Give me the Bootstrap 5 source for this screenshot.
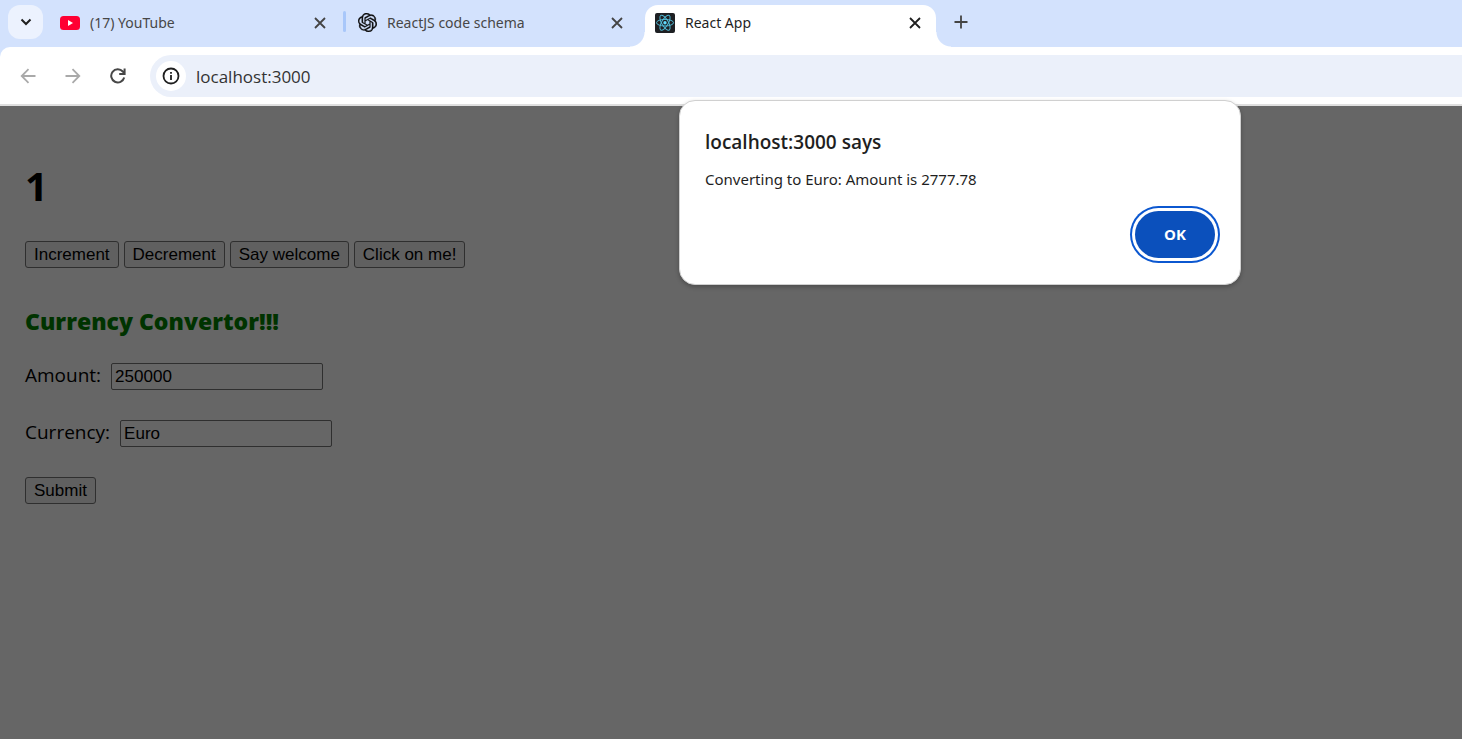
<!DOCTYPE html>
<html lang="en">
<head>
<meta charset="utf-8">
<meta name="viewport" content="width=device-width, initial-scale=1">
<title>React App</title>
<link href="https://cdn.jsdelivr.net/npm/bootstrap@5.3.0/dist/css/bootstrap.min.css" rel="stylesheet">
<style>
  body { font-family: "Open Sans", "Noto Sans", sans-serif; background: #666; color: #000; }
  button, input { font-family: inherit; }
  svg { display: block; flex: none; }
  .plain-btn { border: 0; padding: 0; background: none; display: flex; align-items: center; justify-content: center; }

  /* tab strip */
  .tab-strip { background: #d3e2fd; height: 47px; padding-left: 8px; }
  .tab-search { width: 35px; height: 34px; margin: 5px 1px 0 0; border-radius: 12px; background: #ecf2fe; color: #1f1f1f; }
  .browser-tab { width: 299px; height: 42px; margin-top: 5px; padding: 0 13px 7px 12px; color: #474747; font-family: "Noto Sans", sans-serif; font-size: 14px; line-height: 20px; }
  .browser-tab a { color: inherit; text-decoration: none; gap: 10px; }
  .tab-close { width: 20px; height: 20px; color: #444; }
  .tab-rule { width: 3px; height: 21px; margin-top: 11px; border-radius: 2px; background: #a8c7fa; }
  .tab-before { width: 294px; margin-right: 5px; }
  .tab-active { position: relative; width: 291px; padding-left: 10px; padding-right: 11px; background: #fff; border-radius: 13px 13px 0 0; color: #1f1f1f; }
  .tab-active .tab-close { color: #1f1f1f; }
  .tab-active::before, .tab-active::after { content: ""; position: absolute; bottom: 0; width: 15px; height: 15px; }
  .tab-active::before { right: 100%; background: radial-gradient(circle at 0 0, transparent 14px, #fff 15px); }
  .tab-active::after { left: 100%; background: radial-gradient(circle at 100% 0, transparent 14px, #fff 15px); }
  .new-tab { width: 20px; height: 20px; margin: 12px 0 0 15px; color: #444; }

  /* toolbar */
  .toolbar-wrap { background: #d3e2fd; }
  .toolbar { background: #fff; border-radius: 10px 0 0 0; border-bottom: 2px solid #dfdfdf; padding: 8px 0 7px 18px; }
  .nav-icons { gap: 25px; color: #a9a9a9; }
  .nav-icons button { width: 20px; height: 20px; color: inherit; }
  .nav-icons .reload { color: #474747; }
  .omnibox { margin-left: 22px; padding-left: 6px; height: 42px; border-radius: 21px 0 0 21px; background: #ebf0fa; gap: 10px; }
  .site-info { width: 30px; height: 30px; border-radius: 50%; background: #fff; color: #1f1f1f; }
  .address { border: 0; outline: 0; padding: 1px 0 0; background: none; font-size: 17px; color: #333; min-width: 0; }

  /* dimmed page */
  .page { padding: 55px 25px; }
  .counter { font-size: 40px; line-height: 50px; font-weight: 700; margin: 0 0 30px; }
  .ui-btn { font: 17px/23px "Liberation Sans", Arial, sans-serif; color: #000; background: #606060; border: 1px solid #2f2f2f; border-radius: 3px; padding: 1px 8px; height: 27px; }
  .btn-line { gap: 5px; }
  .converter-title { font-size: 23px; line-height: 30px; font-weight: 800; color: #030; margin: 38px 0 27px; }
  .form-line { gap: 10px; margin-bottom: 30px; height: 27px; font-size: 19px; line-height: 24px; }
  .ui-input { font: 17px/23px "Liberation Sans", Arial, sans-serif; width: 212px; height: 27px; padding: 1px 3px; background: #666; border: 1px solid #2f2f2f; border-radius: 2px; color: #000; }

  /* alert floating over the toolbar and the page */
  .alert-box { position: absolute; top: 100px; left: 679px; width: 562px; padding: 26px 25px; border: 1px solid #d0d0d0; border-radius: 16px; background: #fff; color: #1f1f1f; box-shadow: 0 2px 4px rgba(0,0,0,.25); }
  .alert-box h2 { font-size: 19px; line-height: 30px; font-weight: 600; margin: 0 0 12px; }
  .alert-box p { font-family: "Noto Sans", sans-serif; font-size: 15px; line-height: 20px; margin: 0 0 22px; }
  .ok-btn { width: 80px; height: 47px; border: 0; border-radius: 24px; background: #0b50bc; color: #fff; font-size: 15px; font-weight: 700; box-shadow: 0 0 0 3px #fff, 0 0 0 5px #0b57d0; }
</style>
</head>
<body>
<header>
  <nav class="tab-strip d-flex align-items-start" aria-label="Tabs">
    <button class="plain-btn tab-search" type="button" aria-label="Search tabs">
      <svg width="12" height="8" viewBox="0 0 12 8" fill="none" stroke="currentColor" stroke-width="2"><path d="M1.500 1.500 6 6l4.500-4.500"/></svg>
    </button>
    <div class="browser-tab d-flex align-items-center justify-content-between">
      <a href="#" class="d-flex align-items-center">
        <svg class="ms-1" width="20" height="14" viewBox="0 0 20 14"><rect width="20" height="14" rx="3.500" fill="#ff0033"/><path d="M8 4v6l5-3z" fill="#fff"/></svg>
        <span>(17) YouTube</span>
      </a>
      <button class="plain-btn tab-close" type="button" aria-label="Close tab"><svg width="12" height="12" viewBox="0 0 12 12" stroke="currentColor" stroke-width="1.800"><path d="M1 1l10 10M11 1 1 11"/></svg></button>
    </div>
    <div class="tab-rule"></div>
    <div class="browser-tab tab-before d-flex align-items-center justify-content-between">
      <a href="#" class="d-flex align-items-center">
        <svg width="19" height="19" viewBox="0 0 24 24" fill="#0d0d0d" stroke="#0d0d0d" stroke-width=".4"><path d="M22.2819 9.8211a5.9847 5.9847 0 0 0-.5157-4.9108 6.0462 6.0462 0 0 0-6.5098-2.9A6.0651 6.0651 0 0 0 4.9807 4.1818a5.9847 5.9847 0 0 0-3.9977 2.9 6.0462 6.0462 0 0 0 .7427 7.0966 5.98 5.98 0 0 0 .511 4.9107 6.051 6.051 0 0 0 6.5146 2.9001A5.9847 5.9847 0 0 0 13.2599 24a6.0557 6.0557 0 0 0 5.7718-4.2058 5.9894 5.9894 0 0 0 3.9977-2.9001 6.0557 6.0557 0 0 0-.7475-7.0729zm-9.022 12.6081a4.4755 4.4755 0 0 1-2.8764-1.0408l.1419-.0804 4.7783-2.7582a.7948.7948 0 0 0 .3927-.6813v-6.7369l2.02 1.1686a.071.071 0 0 1 .038.052v5.5826a4.504 4.504 0 0 1-4.4945 4.4944zm-9.6607-4.1254a4.4708 4.4708 0 0 1-.5346-3.0137l.142.0852 4.783 2.7582a.7712.7712 0 0 0 .7806 0l5.8428-3.3685v2.3324a.0804.0804 0 0 1-.0332.0615L9.74 19.9502a4.4992 4.4992 0 0 1-6.1408-1.6464zM2.3408 7.8956a4.485 4.485 0 0 1 2.3655-1.9728V11.6a.7664.7664 0 0 0 .3879.6765l5.8144 3.3543-2.0201 1.1685a.0757.0757 0 0 1-.071 0l-4.8303-2.7865A4.504 4.504 0 0 1 2.3408 7.872zm16.5963 3.8558L13.1038 8.364 15.1192 7.2a.0757.0757 0 0 1 .071 0l4.8303 2.7913a4.4944 4.4944 0 0 1-.6765 8.1042v-5.6772a.79.79 0 0 0-.407-.667zm2.0107-3.0231l-.142-.0852-4.7735-2.7818a.7759.7759 0 0 0-.7854 0L9.409 9.2297V6.8974a.0662.0662 0 0 1 .0284-.0615l4.8303-2.7866a4.4992 4.4992 0 0 1 6.6802 4.66zM8.3065 12.863l-2.02-1.1638a.0804.0804 0 0 1-.038-.0567V6.0742a4.4992 4.4992 0 0 1 7.3757-3.4537l-.142.0805L8.704 5.459a.7948.7948 0 0 0-.3927.6813zm1.0976-2.3654l2.602-1.4998 2.6069 1.4998v2.9994l-2.5974 1.4997-2.6067-1.4997Z"/></svg>
        <span>ReactJS code schema</span>
      </a>
      <button class="plain-btn tab-close" type="button" aria-label="Close tab"><svg width="12" height="12" viewBox="0 0 12 12" stroke="currentColor" stroke-width="1.800"><path d="M1 1l10 10M11 1 1 11"/></svg></button>
    </div>
    <div class="browser-tab tab-active d-flex align-items-center justify-content-between">
      <a href="#" class="d-flex align-items-center" aria-current="page">
        <svg width="20" height="20" viewBox="0 0 20 20"><rect width="20" height="20" rx="2" fill="#1d1f23"/><g fill="none" stroke="#4fb8d3" stroke-width="1"><ellipse cx="10" cy="9.700" rx="8.500" ry="3.300"/><ellipse cx="10" cy="9.700" rx="8.500" ry="3.300" transform="rotate(60 10 9.700)"/><ellipse cx="10" cy="9.700" rx="8.500" ry="3.300" transform="rotate(120 10 9.700)"/></g><circle cx="10" cy="9.700" r="1.700" fill="#61dafb"/></svg>
        <span>React App</span>
      </a>
      <button class="plain-btn tab-close" type="button" aria-label="Close tab"><svg width="12" height="12" viewBox="0 0 12 12" stroke="currentColor" stroke-width="1.800"><path d="M1 1l10 10M11 1 1 11"/></svg></button>
    </div>
    <button class="plain-btn new-tab" type="button" aria-label="New tab"><svg width="14" height="14" viewBox="0 0 14 14" stroke="currentColor" stroke-width="1.800"><path d="M7 .5v13M.5 7h13"/></svg></button>
  </nav>
  <div class="toolbar-wrap">
    <div class="toolbar d-flex align-items-center">
      <div class="nav-icons d-flex">
        <button class="plain-btn" type="button" aria-label="Back"><svg width="16" height="16" viewBox="0 0 16 16" fill="none" stroke="currentColor" stroke-width="1.800"><path d="M15.500 8H2M8.500 1.200 1.700 8l6.800 6.800"/></svg></button>
        <button class="plain-btn" type="button" aria-label="Forward"><svg width="16" height="16" viewBox="0 0 16 16" fill="none" stroke="currentColor" stroke-width="1.800"><path d="M.5 8H14M7.500 1.200 14.300 8l-6.800 6.800"/></svg></button>
        <button class="plain-btn reload" type="button" aria-label="Reload"><svg width="16" height="16" viewBox="0 0 16 16" fill="none" stroke="currentColor" stroke-width="2"><path d="M14.200 9.500A6.600 6.600 0 1 1 12.800 3.500L14.500 5.300M14.600.5v5.400H9.200"/></svg></button>
      </div>
      <div class="omnibox d-flex align-items-center flex-grow-1">
        <button class="plain-btn site-info" type="button" aria-label="Site information"><svg width="18" height="18" viewBox="0 0 18 18" fill="none" stroke="currentColor" stroke-width="1.800"><circle cx="9" cy="9" r="7.500"/><path d="M9 8v5M9 5v1.800"/></svg></button>
        <input class="address flex-grow-1" type="text" value="localhost:3000" aria-label="Address">
      </div>
    </div>
  </div>
</header>

<main class="page">
  <h1 class="counter">1</h1>
  <div class="btn-line d-flex flex-wrap">
    <button class="ui-btn" type="button">Increment</button>
    <button class="ui-btn" type="button">Decrement</button>
    <button class="ui-btn" type="button">Say welcome</button>
    <button class="ui-btn" type="button">Click on me!</button>
  </div>
  <h2 class="converter-title">Currency Convertor!!!</h2>
  <form>
    <div class="form-line d-flex align-items-start"><label for="amount">Amount:</label><input class="ui-input" id="amount" type="text" value="250000"></div>
    <div class="form-line d-flex align-items-start"><label for="currency">Currency:</label><input class="ui-input" id="currency" type="text" value="Euro"></div>
    <button class="ui-btn" type="button">Submit</button>
  </form>
</main>

<div class="alert-box" role="alertdialog" aria-labelledby="alert-title" aria-describedby="alert-text">
  <h2 id="alert-title">localhost:3000 says</h2>
  <p id="alert-text">Converting to Euro: Amount is 2777.78</p>
  <div class="d-flex justify-content-end"><button class="ok-btn" type="button">OK</button></div>
</div>
<script src="https://cdn.jsdelivr.net/npm/bootstrap@5.3.0/dist/js/bootstrap.bundle.min.js"></script>
</body>
</html>
